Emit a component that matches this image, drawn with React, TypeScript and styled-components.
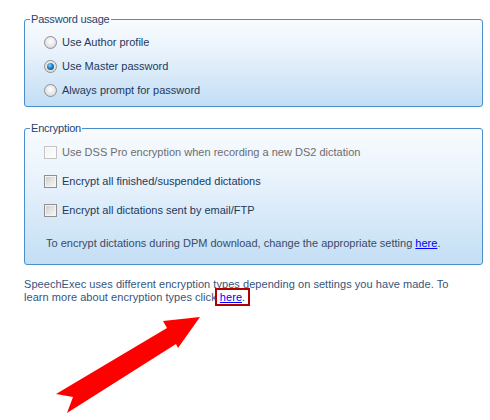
import React from "react";
import styled, { createGlobalStyle } from "styled-components";

const Global = createGlobalStyle`
  html, body { margin: 0; padding: 0; background: #ffffff; }
  body { font-family: "Liberation Sans", Arial, sans-serif; font-size: 11px; }
`;

const Page = styled.div`
  position: relative;
  width: 490px;
  height: 420px;
  box-sizing: border-box;
  padding: 12px 7px 0 24px;
  overflow: hidden;
`;

const Group = styled.fieldset<{ $pb: number; $pt: number }>`
  margin: 0;
  padding: ${(p) => p.$pt}px 5px ${(p) => p.$pb}px 5px;
  border: 1px solid #4a8fcb;
  border-radius: 3px;
  background: linear-gradient(to bottom, #f8fbfe 0%, #eaf3fc 35%, #c3def5 100%);
  min-width: 0;
`;

const Legend = styled.legend`
  padding: 0 1px;
  line-height: 14px;
  font-size: 11px;
  color: #1e4470;
  letter-spacing: -0.2px;
`;

const Spacer = styled.div`
  height: 14px;
`;

const List = styled.div<{ $gap: number }>`
  display: flex;
  flex-direction: column;
  gap: ${(p) => p.$gap}px;
  padding-left: 14px;
`;

const Row = styled.label<{ $disabled?: boolean }>`
  display: flex;
  align-items: center;
  height: 24px;
  gap: 5px;
  color: ${(p) => (p.$disabled ? "#6d6d6d" : "#1e395b")};
  font-size: 11px;
`;

const Radio = styled.span<{ $checked?: boolean }>`
  width: 11px;
  height: 11px;
  border-radius: 50%;
  border: 1px solid #8d9094;
  background: radial-gradient(circle at 50% 40%, #ffffff 0%, #e6e6e6 55%, #cfcfcf 100%);
  display: flex;
  align-items: center;
  justify-content: center;
  flex: none;
  &::after {
    content: "";
    display: ${(p) => (p.$checked ? "block" : "none")};
    width: 7px;
    height: 7px;
    border-radius: 50%;
    background: radial-gradient(circle at 40% 35%, #8fd0f7 0%, #1f7fc4 45%, #0a3f72 100%);
  }
`;

const Check = styled.span<{ $disabled?: boolean }>`
  width: 11px;
  height: 11px;
  flex: none;
  border: 1px solid ${(p) => (p.$disabled ? "#c4c4c4" : "#8e8f8f")};
  background: ${(p) =>
    p.$disabled
      ? "linear-gradient(135deg, #f2f2f2, #ffffff)"
      : "linear-gradient(135deg, #c9c9c9 0%, #e4e4e4 50%, #f8f8f8 100%)"};
  box-shadow: inset 0 0 0 1px ${(p) => (p.$disabled ? "#fbfbfb" : "#f4f4f4")};
`;

const Note = styled.div`
  margin-top: 14px;
  padding-left: 16px;
  line-height: 14px;
  color: #394b66;
`;

const Link = styled.a`
  color: #0000ff;
  text-decoration: underline;
  cursor: pointer;
`;

const Para = styled.p`
  margin: 13px 0 0 0;
  line-height: 13px;
  color: #35557c;
  font-size: 11px;
  letter-spacing: 0.05px;
`;

const Boxed = styled.span`
  position: relative;
  &::after {
    content: "";
    position: absolute;
    left: -5px;
    right: -5px;
    top: -3px;
    bottom: -3px;
    border: 2px solid #b00000;
  }
`;

const Arrow = styled.svg`
  position: absolute;
  left: 0;
  top: 0;
  pointer-events: none;
`;

export default function App() {
  return (
    <Page>
      <Global />
      <Group $pt={4} $pb={4}>
        <Legend>Password usage</Legend>
        <List $gap={0}>
          <Row>
            <Radio />
            Use Author profile
          </Row>
          <Row>
            <Radio $checked />
            Use Master password
          </Row>
          <Row>
            <Radio />
            Always prompt for password
          </Row>
        </List>
      </Group>
      <Spacer />
      <Group $pt={5} $pb={14}>
        <Legend>Encryption</Legend>
        <List $gap={5}>
          <Row $disabled>
            <Check $disabled />
            Use DSS Pro encryption when recording a new DS2 dictation
          </Row>
          <Row>
            <Check />
            Encrypt all finished/suspended dictations
          </Row>
          <Row>
            <Check />
            Encrypt all dictations sent by email/FTP
          </Row>
        </List>
        <Note>
          To encrypt dictations during DPM download, change the appropriate setting <Link>here</Link>.
        </Note>
      </Group>
      <Para>
        SpeechExec uses different encryption types depending on settings you have made. To
        <br />
        learn more about encryption types click{" "}
        <Boxed>
          <Link>here</Link>.
        </Boxed>
      </Para>
      <Arrow width="490" height="420" viewBox="0 0 490 420">
        <polygon
          points="200,317 163,321 167,328 56,394 73,397 67,413 176,344 178,348"
          fill="#ff0000"
        />
      </Arrow>
    </Page>
  );
}
